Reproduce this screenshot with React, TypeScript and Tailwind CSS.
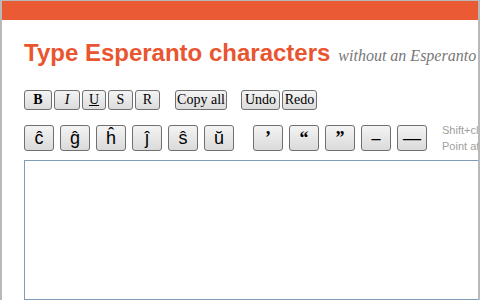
import React from 'react';

const fmtButtons = [
  { label: 'B', cls: 'font-bold w-[28px]' },
  { label: 'I', cls: 'italic w-[26px]' },
  { label: 'U', cls: 'underline w-[24px]' },
  { label: 'S', cls: 'text-[9px] w-[25px]' },
  { label: 'R', cls: 'w-[25px]' },
];

const letters = ['ĉ', 'ĝ', 'ĥ', 'ĵ', 'ŝ', 'ŭ'];
const punct = ['’', '“', '”', '–', '—'];

const btn =
  'h-[20px] rounded-[3px] border border-[#707070] bg-gradient-to-b from-[#f4f4f4] to-[#dcdcdc] text-[14px] leading-none text-black flex items-center justify-center';

const bigBtn =
  'h-[26px] w-[30px] rounded-[3px] border border-[#707070] bg-gradient-to-b from-[#f4f4f4] to-[#dadada] text-[18px] leading-none text-black flex items-center justify-center';

const App: React.FC = () => {
  return (
    <div className="w-[480px] h-[300px] overflow-hidden bg-white border-t border-l-2 border-r-2 border-[#b9b9b9] flex flex-col">
      {/* Top bar */}
      <div className="h-[19px] shrink-0 bg-[#ea5a34]" />

      <div className="pl-[22px] flex flex-col flex-1 min-h-0">
        {/* Heading */}
        <div className="mt-[19px] flex items-baseline whitespace-nowrap">
          <h1 className="text-[24px] leading-[28px] font-bold text-[#e9552f] font-['Liberation_Sans',Arial,sans-serif]">
            Type Esperanto characters
          </h1>
          <span className="ml-[8px] text-[16px] italic text-[#777777] font-['Liberation_Serif',Georgia,serif]">
            without an Esperanto keyboard
          </span>
        </div>

        {/* Toolbar row 1 */}
        <div className="mt-[22px] flex items-center font-['Liberation_Serif','Times_New_Roman',serif]">
          <div className="flex gap-[2px]">
            {fmtButtons.map((b) => (
              <button key={b.label} className={`${btn} ${b.cls}`}>
                {b.label}
              </button>
            ))}
          </div>
          <button className={`${btn} ml-[15px] w-[52px]`}>Copy all</button>
          <div className="ml-[14px] flex gap-[2px]">
            <button className={`${btn} w-[39px]`}>Undo</button>
            <button className={`${btn} w-[35px]`}>Redo</button>
          </div>
        </div>

        {/* Toolbar row 2 */}
        <div className="mt-[15px] h-[26px] flex items-center font-['Liberation_Sans',Arial,sans-serif]">
          <div className="flex gap-[6px]">
            {letters.map((l) => (
              <button key={l} className={bigBtn}>
                {l}
              </button>
            ))}
          </div>
          <div className="ml-[19px] flex gap-[6px] font-['Liberation_Serif','Times_New_Roman',serif]">
            {punct.map((p) => (
              <button key={p} className={`${bigBtn} text-[13px] font-bold`}>
                {p}
              </button>
            ))}
          </div>
          <div className="ml-[15px] text-[11px] leading-[16px] text-[#a0a0a0] whitespace-nowrap">
            <div>Shift+click to insert capital</div>
            <div>Point at a button for help</div>
          </div>
        </div>

        {/* Text area */}
        <textarea className="mt-[9px] flex-1 w-[470px] border border-[#7f9db9] resize-none outline-none" />
      </div>
    </div>
  );
};

export default App;
